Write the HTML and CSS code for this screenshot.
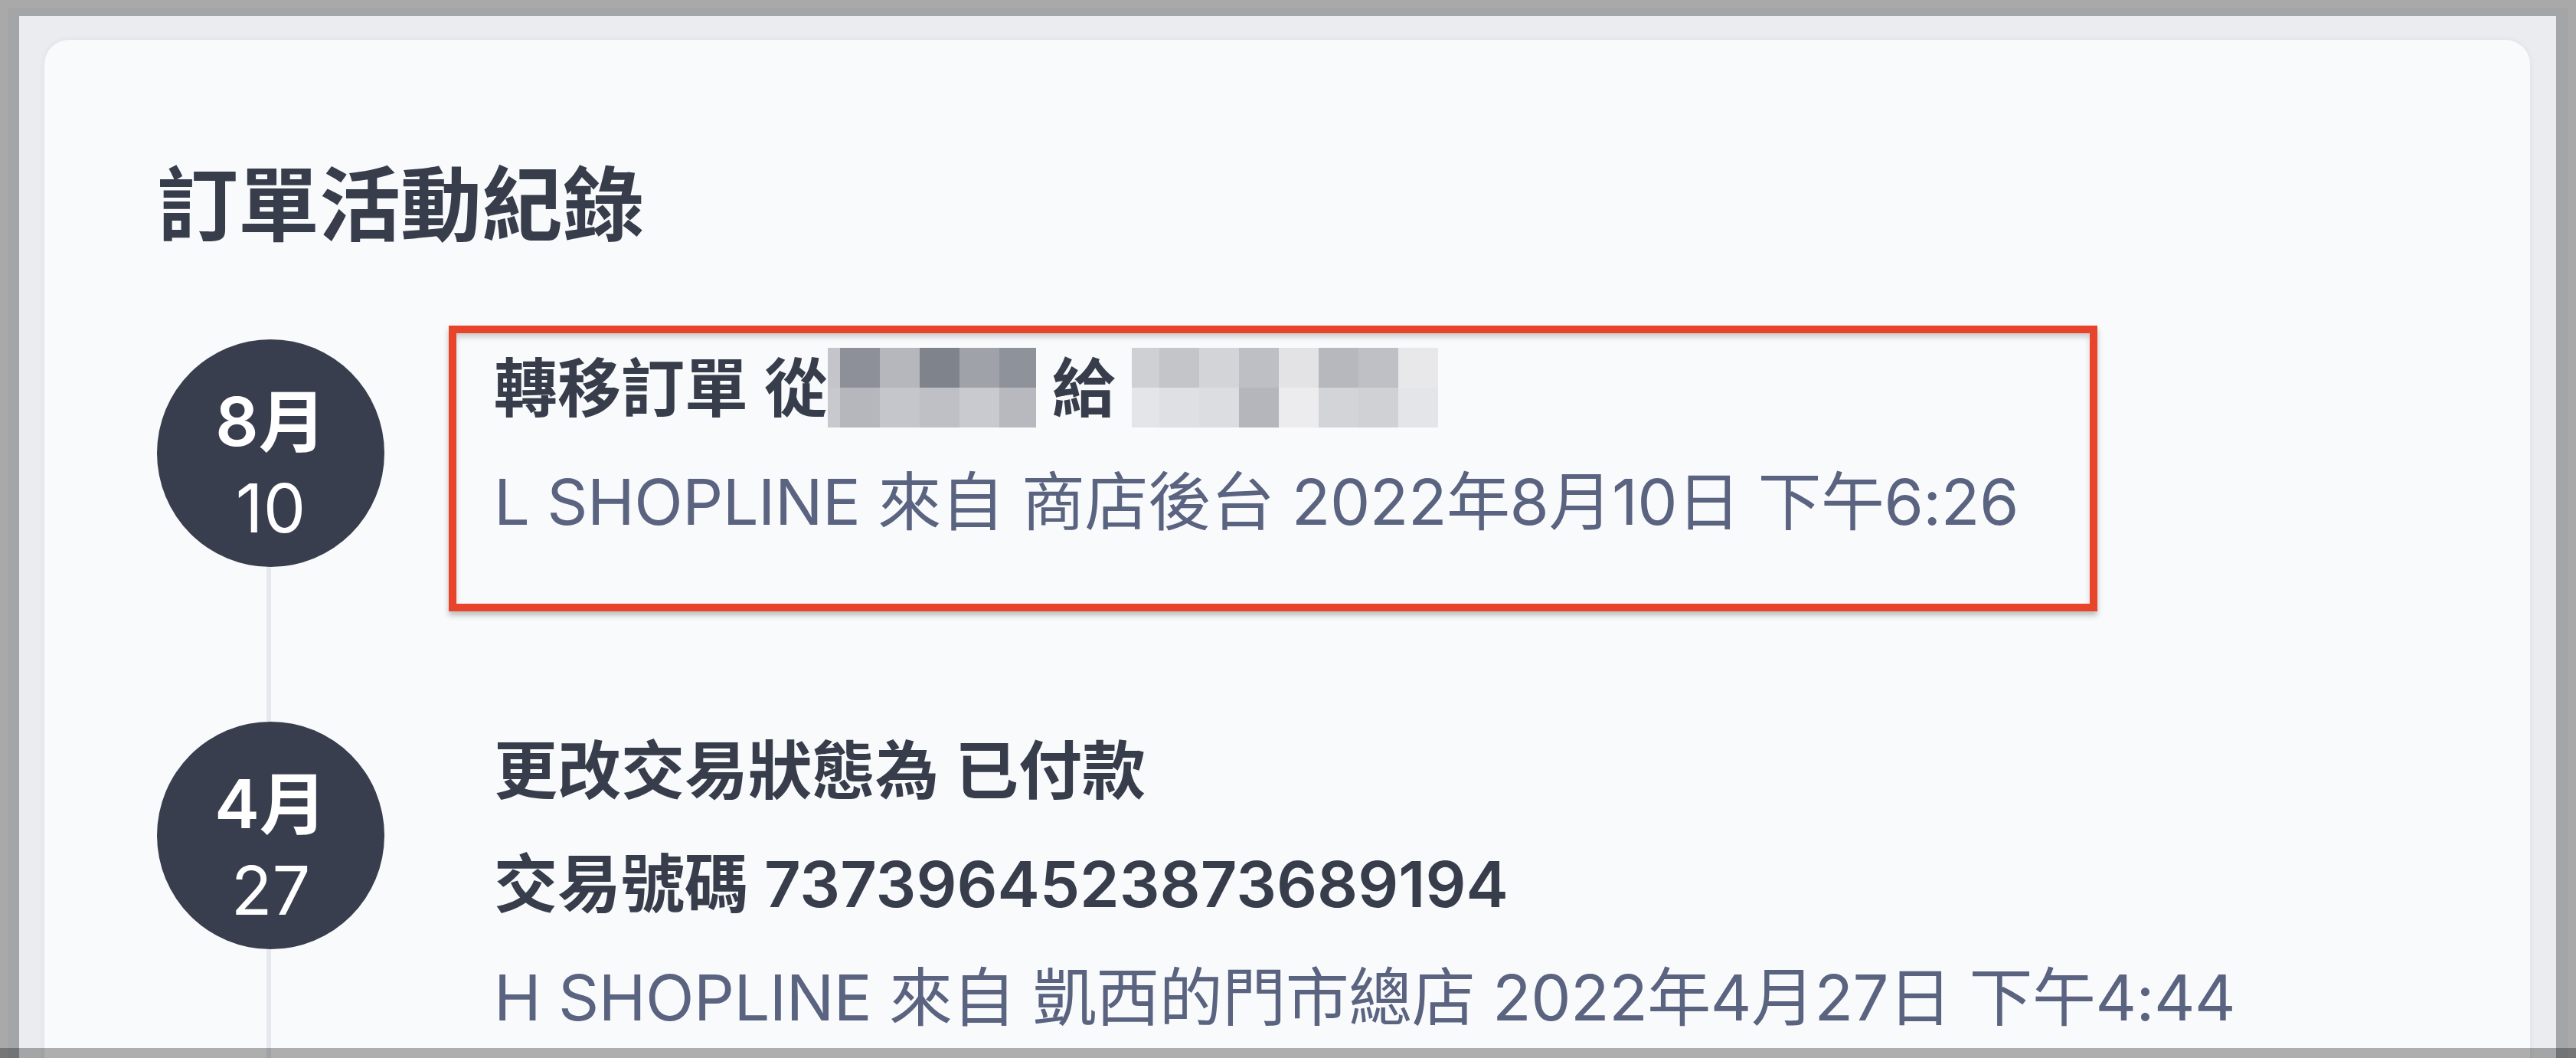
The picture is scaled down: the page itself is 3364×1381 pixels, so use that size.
FILE: index.html
```html
<!DOCTYPE html>
<html>
<head>
  <meta charset="UTF-8" />
  <title>訂單活動紀錄</title>
  <link rel="stylesheet" href="styles.css">
</head>
<body>
  <div class="window">
    <div class="screen">
      <div class="card">
        <h2 class="card-title">訂單活動紀錄</h2>
        <ul class="timeline">
          <li class="event">
            <div class="event-date">
              <span class="month">8月</span>
              <span class="day">10</span>
            </div>
            <div class="event-body">
              <p class="event-line">轉移訂單 從<span class="pixelated"><span class="pixel-grid grid-a">
                <i style="background:#c4c5ca"></i><i style="background:#8e9099"></i><i style="background:#b6b7bd"></i><i style="background:#7e838c"></i><i style="background:#a0a2a9"></i><i style="background:#8e929a"></i>
                <i style="background:#c8c9ce"></i><i style="background:#b6b7bc"></i><i style="background:#c5c6cb"></i><i style="background:#bfc0c5"></i><i style="background:#c9cacf"></i><i style="background:#b8b9be"></i>
              </span></span> 給 <span class="pixelated"><span class="pixel-grid grid-b">
                <i style="background:#cfd0d4"></i><i style="background:#c4c5c9"></i><i style="background:#d3d4d8"></i><i style="background:#bebfc4"></i><i style="background:#e3e3e6"></i><i style="background:#b7b8bd"></i><i style="background:#bfc0c5"></i><i style="background:#e8e8eb"></i>
                <i style="background:#e4e5e8"></i><i style="background:#dfe0e3"></i><i style="background:#dcdde1"></i><i style="background:#b5b6bb"></i><i style="background:#ececee"></i><i style="background:#d3d4d8"></i><i style="background:#d0d1d5"></i><i style="background:#e4e5e8"></i>
              </span></span></p>
              <p class="event-meta">L SHOPLINE 來自 商店後台 2022年8月10日 下午6:26</p>
            </div>
            <div class="highlight"></div>
          </li>
          <li class="event">
            <div class="event-date">
              <span class="month">4月</span>
              <span class="day">27</span>
            </div>
            <div class="event-body">
              <p class="event-line">更改交易狀態為 已付款</p>
              <p class="event-line">交易號碼 7373964523873689194</p>
              <p class="event-meta">H SHOPLINE 來自 凱西的門市總店 2022年4月27日 下午4:44</p>
            </div>
          </li>
        </ul>
      </div>
    </div>
  </div>
  <div class="screen-edge"></div>
</body>
</html>
```

FILE: styles.css
```css
body {
  margin: 0;
  height: 1381px;
  overflow: hidden;
  background-color: #a9a9a9;
  font-family: Inter, "Noto Sans CJK TC", sans-serif;
  color: #383d4c;
}

.window {
  box-sizing: border-box;
  height: 1371px;
  margin: 10px 10px 0;
  padding: 11px 16px 0 15px;
  background-color: #a4a5a7;
}

.screen {
  box-sizing: border-box;
  height: 100%;
  padding: 31px 34px 0 33px;
  background-color: #ebecef;
  overflow: hidden;
}

.card {
  min-height: 1600px;
  padding: 152px 0 0 147px;
  border-radius: 32px;
  background-color: #f9fafb;
  box-shadow: 0 0 8px rgba(0, 0, 0, 0.06);
}

.card-title {
  margin: 0 0 112px;
  font-size: 106px;
  line-height: 127px;
  font-weight: 600;
}

.timeline {
  list-style: none;
  margin: 0;
  padding: 0;
}

.event {
  position: relative;
  display: flex;
  align-items: flex-start;
  margin-bottom: 202px;
}

.event::before {
  content: "";
  position: absolute;
  left: 143px;
  top: 297px;
  width: 6px;
  height: 202px;
  background-color: #e6e8ee;
}

.event-date {
  box-sizing: border-box;
  flex: none;
  display: flex;
  flex-direction: column;
  align-items: center;
  width: 297px;
  height: 297px;
  padding-top: 51px;
  border-radius: 50%;
  background-color: #393e4f;
  color: #fff;
  font-size: 88px;
  line-height: 113px;
}

.month {
  font-weight: 600;
}

.event-body {
  margin: -10px 0 0 143px;
}

.event-line,
.event-meta {
  margin: 0;
  font-size: 83px;
  line-height: 148px;
  white-space: nowrap;
}

.event-line {
  font-weight: 600;
}

.event-meta {
  color: #5a6380;
  letter-spacing: -0.5px;
}

.pixelated {
  display: inline-block;
  overflow: hidden;
  vertical-align: -21px;
}

.pixel-grid {
  display: grid;
  grid-template-rows: 52px 52px;
}

.pixel-grid i {
  display: block;
}

.grid-a {
  grid-template-columns: 16px 52px 52px 52px 52px 48px;
}

.grid-b {
  grid-template-columns: 36px repeat(7, 52px);
}

.highlight {
  position: absolute;
  left: 381px;
  top: -18px;
  box-sizing: border-box;
  width: 2153px;
  height: 373px;
  border: 10px solid #e8442b;
  box-shadow: 0 5px 7px rgba(0, 0, 0, 0.25), inset 0 5px 7px rgba(0, 0, 0, 0.18);
}

.screen-edge {
  position: fixed;
  left: 0;
  right: 0;
  bottom: 0;
  height: 13px;
  background-color: rgba(0, 0, 0, 0.3);
}
```
